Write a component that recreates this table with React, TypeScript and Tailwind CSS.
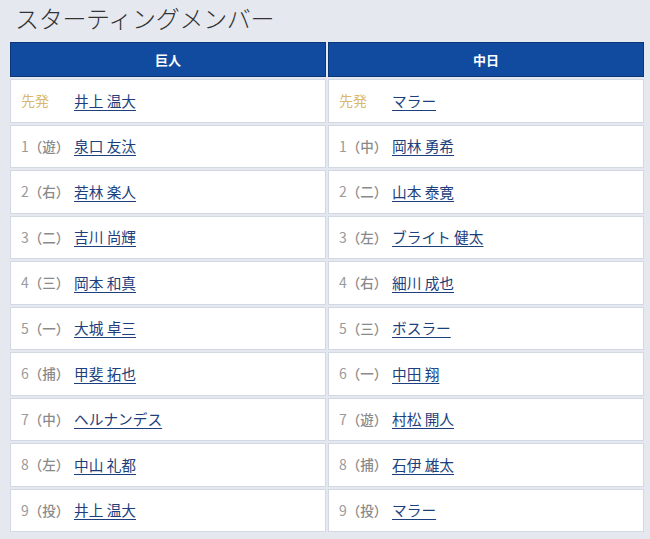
const teams = [
  {
    name: '巨人',
    pitcher: '井上 温大',
    order: [
      ['遊', '泉口 友汰'],
      ['右', '若林 楽人'],
      ['二', '吉川 尚輝'],
      ['三', '岡本 和真'],
      ['一', '大城 卓三'],
      ['捕', '甲斐 拓也'],
      ['中', 'ヘルナンデス'],
      ['左', '中山 礼都'],
      ['投', '井上 温大'],
    ],
  },
  {
    name: '中日',
    pitcher: 'マラー',
    order: [
      ['中', '岡林 勇希'],
      ['二', '山本 泰寛'],
      ['左', 'ブライト 健太'],
      ['右', '細川 成也'],
      ['三', 'ボスラー'],
      ['一', '中田 翔'],
      ['遊', '村松 開人'],
      ['捕', '石伊 雄太'],
      ['投', 'マラー'],
    ],
  },
];

function Row({ label, name, starter }: { label: React.ReactNode; name: string; starter?: boolean }) {
  return (
    <div className="h-[43.5px] bg-white border border-[#d3d9e4] flex items-center pl-[10px] text-[14px]">
      <span className={`w-[53px] shrink-0 ${starter ? 'text-[#d9b86c]' : 'text-[#9a9a9a]'}`}>{label}</span>
      <a href="#" className="text-[14.7px] text-[#1d3f7e] underline underline-offset-[3px] decoration-1">
        {name}
      </a>
    </div>
  );
}

export default function App() {
  return (
    <div
      className="w-[650px] h-[539px] bg-[#e5e9ef] pl-[10px] pr-[6px] overflow-hidden"
      style={{ fontFamily: '"Noto Sans CJK JP", "Noto Sans", sans-serif' }}
    >
      <h1 className="h-[36px] leading-[36px] pl-[5px] text-[24px] font-light text-[#333] tracking-[-0.3px]">
        スターティングメンバー
      </h1>
      <div className="mt-[6px] grid grid-cols-2 gap-[2px]">
        {teams.map((team) => (
          <div key={team.name} className="flex flex-col gap-[2px]">
            <div className="h-[35px] bg-[#114b9f] border border-[#0b367a] flex items-center justify-center text-white text-[13px] font-bold">
              {team.name}
            </div>
            <Row label="先発" name={team.pitcher} starter />
            {team.order.map(([pos, player], i) => (
              <Row
                key={i}
                label={
                  <>
                    {i + 1}
                    <span className="text-[13.5px] font-medium text-[#8a8a8a]">（{pos}）</span>
                  </>
                }
                name={player}
              />
            ))}
          </div>
        ))}
      </div>
    </div>
  );
}
